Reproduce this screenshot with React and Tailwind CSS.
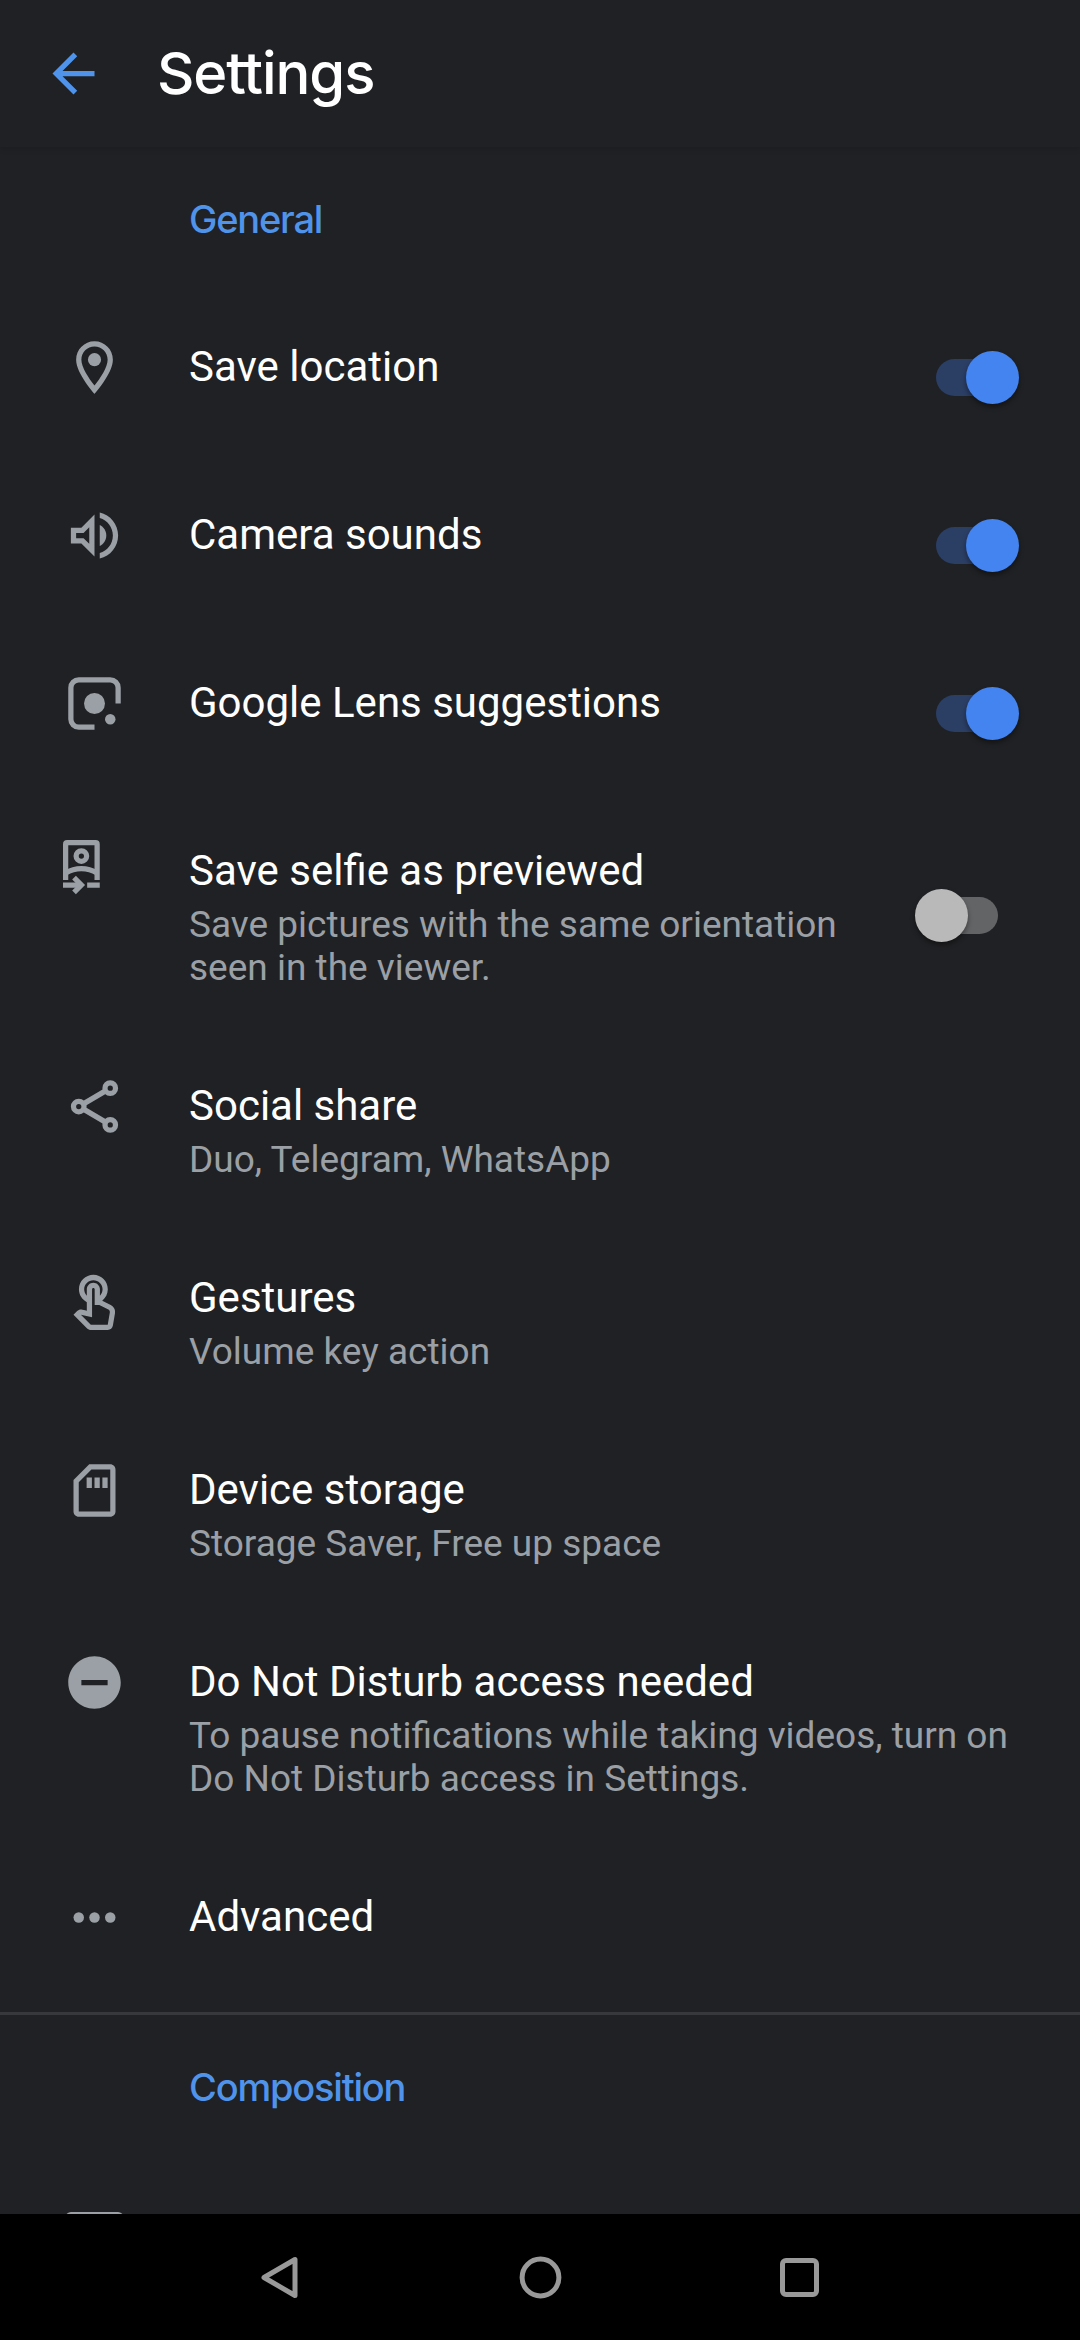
import React, { useState } from "react";

const svgProps = {
  width: 63,
  height: 63,
  viewBox: "0 0 24 24",
  fill: "currentColor",
};

const PinIcon = () => (
  <svg {...svgProps}>
    <path d="M12 2C8.13 2 5 5.13 5 9c0 5.25 7 13 7 13s7-7.75 7-13c0-3.87-3.13-7-7-7zM7 9c0-2.76 2.24-5 5-5s5 2.24 5 5c0 2.88-2.88 7.19-5 9.88C9.92 16.21 7 11.85 7 9z" />
    <circle cx="12" cy="9" r="2.5" />
  </svg>
);

const VolumeIcon = () => (
  <svg {...svgProps}>
    <path d="M3 9v6h4l5 5V4L7 9H3zm7-.17v6.34L7.83 13H5v-2h2.83L10 8.83z" />
    <path d="M14 7.97v8.05c1.48-.73 2.5-2.25 2.5-4.02 0-1.77-1.02-3.29-2.5-4.03z" />
    <path d="M14 3.23v2.06c2.89.86 5 3.54 5 6.71s-2.11 5.85-5 6.71v2.06c4.01-.91 7-4.49 7-8.77s-2.99-7.86-7-8.77z" />
  </svg>
);

const LensIcon = () => (
  <svg {...svgProps}>
    <path
      d="M12 21H6a3 3 0 0 1-3-3V6a3 3 0 0 1 3-3h12a3 3 0 0 1 3 3v6"
      fill="none"
      stroke="currentColor"
      strokeWidth="2"
    />
    <circle cx="12" cy="12" r="4" />
    <circle cx="18" cy="18" r="2" />
  </svg>
);

const SelfieIcon = () => (
  <svg {...svgProps} fill="none" stroke="currentColor" strokeWidth="2">
    <path d="M1 15.2V1.6Q1 1 1.6 1h10.8Q13 1 13 1.6v13.6" />
    <circle cx="7" cy="6.1" r="2" />
    <path d="M1 12.6Q3.8 10.9 7 10.9t6 1.7" />
    <path d="M0 17.15h6.5M9.2 17.15H14" />
    <path d="M4.2 14.35l2.8 2.8-2.8 2.8" />
  </svg>
);

const ShareIcon = () => (
  <svg {...svgProps} fill="none" stroke="currentColor" strokeWidth="2">
    <circle cx="18" cy="5" r="2" />
    <circle cx="6" cy="12" r="2" />
    <circle cx="18" cy="19" r="2" />
    <path d="M7.8 11l8.4-4.95M7.8 13l8.4 4.95" />
  </svg>
);

const TouchIcon = () => (
  <svg {...svgProps}>
    <path
      transform="translate(0 2)"
      d="M18.19 12.44l-3.24-1.62c1.29-1 2.12-2.56 2.12-4.32 0-3.03-2.47-5.5-5.5-5.5s-5.5 2.47-5.5 5.5c0 2.13 1.22 3.98 3 4.89v3.26c-2.15-.46-2.02-.44-2.26-.44-.53 0-1.03.21-1.41.59L4 16.22l5.09 5.09c.43.44 1.03.69 1.65.69h6.3c.98 0 1.81-.7 1.97-1.67l.8-4.71c.22-1.3-.43-2.58-1.62-3.18zm-.35 2.85l-.8 4.71h-6.3c-.09 0-.17-.04-.24-.1l-3.68-3.68 4.25.89V6.5c0-.28.22-.5.5-.5s.5.22.5.5v6h1.76l3.46 1.73c.4.2.62.63.55 1.06zM8.07 6.5c0-1.93 1.57-3.5 3.5-3.5s3.5 1.57 3.5 3.5c0 .95-.38 1.81-1 2.44V6.5c0-1.38-1.12-2.5-2.5-2.5s-2.5 1.12-2.5 2.5v2.44c-.62-.63-1-1.49-1-2.44z"
    />
  </svg>
);

const StorageIcon = () => (
  <svg {...svgProps}>
    <path d="M18 2h-8L4 8v12c0 1.1.9 2 2 2h12c1.1 0 2-.9 2-2V4c0-1.1-.9-2-2-2zm0 18H6V8.83L10.83 4H18v16zM9 7h2v4H9V7zm3 0h2v4h-2V7zm3 0h2v4h-2V7z" />
  </svg>
);

const DisturbIcon = () => (
  <svg {...svgProps}>
    <path d="M12 2C6.48 2 2 6.48 2 12s4.48 10 10 10 10-4.48 10-10S17.52 2 12 2zm5 11H7v-2h10v2z" />
  </svg>
);

const MoreIcon = () => (
  <svg {...svgProps}>
    <circle cx="6" cy="12" r="2" />
    <circle cx="12" cy="12" r="2" />
    <circle cx="18" cy="12" r="2" />
  </svg>
);

const GridIcon = () => (
  <svg {...svgProps} fill="none" stroke="currentColor" strokeWidth="2">
    <rect x="2" y="4" width="20" height="16" rx="1" />
  </svg>
);

const Switch = ({ checked, onChange }) => (
  <button
    role="switch"
    aria-checked={checked}
    onClick={onChange}
    className="relative top-[1.5px] left-px flex h-[53px] w-[104px] shrink-0 items-center justify-center"
  >
    <span
      className={`h-[37px] w-[62px] rounded-full ${
        checked ? "bg-[#2b3e64]" : "bg-[#636466]"
      }`}
    />
    <span
      className={`absolute top-0 size-[53px] rounded-full shadow-[0_3px_5px_rgba(0,0,0,0.4)] ${
        checked ? "right-0 bg-[#4384f0]" : "left-0 bg-[#b9b9b9]"
      }`}
    />
  </button>
);

const SectionTitle = ({ children }) => (
  <h2 className="h-[145px] shrink-0 pt-[48px] pl-[189px] font-['Inter'] text-[38px] leading-[48px] font-medium tracking-[-1.2px] text-[#4f94ea]">
    {children}
  </h2>
);

const Row = ({ icon: Icon, title, lines = [], height, children }) => (
  <div className={`flex shrink-0 pr-[62px] pl-[63px] ${height}`}>
    <div className="w-[126px] shrink-0 pt-[44px] text-[#9aa0a6]">
      <Icon />
    </div>
    <div className="flex-1 pt-[50px] whitespace-nowrap">
      <div className="mb-[8px] text-[42px] leading-[49px] text-white">
        {title}
      </div>
      {lines.map((line) => (
        <div
          key={line}
          className="text-[37px] leading-[43px] text-[#9aa0a6]"
        >
          {line}
        </div>
      ))}
    </div>
    {children && <div className="flex items-center">{children}</div>}
  </div>
);

const App = () => {
  const [toggles, setToggles] = useState({
    location: true,
    sounds: true,
    lens: true,
    selfie: false,
  });

  const toggle = (key) => setToggles((t) => ({ ...t, [key]: !t[key] }));

  return (
    <div className="flex h-[2340px] w-[1080px] flex-col overflow-hidden bg-[#202124] font-['Roboto',sans-serif]">
      <header className="flex h-[147px] shrink-0 items-center pl-[42px] shadow-[0_2px_6px_rgba(0,0,0,0.12)]">
        <svg {...svgProps} className="text-[#4f94ea]">
          <path d="M20 11H7.83l5.59-5.59L12 4l-8 8 8 8 1.41-1.41L7.83 13H20v-2z" />
        </svg>
        <h1 className="pb-[2px] pl-[52px] font-['Inter'] text-[58px] leading-[72px] font-medium tracking-[-1.1px] text-white">
          Settings
        </h1>
      </header>

      <main className="flex h-[2067px] shrink-0 flex-col overflow-hidden">
        <SectionTitle>General</SectionTitle>
        <Row icon={PinIcon} title="Save location" height="h-[168px]">
          <Switch
            checked={toggles.location}
            onChange={() => toggle("location")}
          />
        </Row>
        <Row icon={VolumeIcon} title="Camera sounds" height="h-[168px]">
          <Switch checked={toggles.sounds} onChange={() => toggle("sounds")} />
        </Row>
        <Row icon={LensIcon} title="Google Lens suggestions" height="h-[168px]">
          <Switch checked={toggles.lens} onChange={() => toggle("lens")} />
        </Row>
        <Row
          icon={SelfieIcon}
          title="Save selfie as previewed"
          lines={[
            "Save pictures with the same orientation",
            "seen in the viewer.",
          ]}
          height="h-[235px]"
        >
          <Switch checked={toggles.selfie} onChange={() => toggle("selfie")} />
        </Row>
        <Row
          icon={ShareIcon}
          title="Social share"
          lines={["Duo, Telegram, WhatsApp"]}
          height="h-[192px]"
        />
        <Row
          icon={TouchIcon}
          title="Gestures"
          lines={["Volume key action"]}
          height="h-[192px]"
        />
        <Row
          icon={StorageIcon}
          title="Device storage"
          lines={["Storage Saver, Free up space"]}
          height="h-[192px]"
        />
        <Row
          icon={DisturbIcon}
          title="Do Not Disturb access needed"
          lines={[
            "To pause notifications while taking videos, turn on",
            "Do Not Disturb access in Settings.",
          ]}
          height="h-[235px]"
        />
        <Row icon={MoreIcon} title="Advanced" height="h-[170px]" />
        <div className="h-[3px] shrink-0 bg-[#37383c]" />
        <SectionTitle>Composition</SectionTitle>
        <Row icon={GridIcon} height="h-[168px]" />
      </main>

      <nav className="flex flex-1 items-center justify-center gap-[196px] bg-black text-[#999999]">
        <svg
          width="63"
          height="63"
          viewBox="0 0 63 63"
          fill="none"
          stroke="currentColor"
          strokeWidth="5"
          strokeLinejoin="round"
        >
          <path d="M14 31.5L45 13.5v36z" />
        </svg>
        <svg
          width="63"
          height="63"
          viewBox="0 0 63 63"
          fill="none"
          stroke="currentColor"
          strokeWidth="5"
        >
          <circle cx="31.5" cy="31.5" r="18.4" />
        </svg>
        <svg
          width="63"
          height="63"
          viewBox="0 0 63 63"
          fill="none"
          stroke="currentColor"
          strokeWidth="5"
        >
          <rect x="14.5" y="14.5" width="34" height="34" rx="3.5" />
        </svg>
      </nav>
    </div>
  );
};

export default App;
